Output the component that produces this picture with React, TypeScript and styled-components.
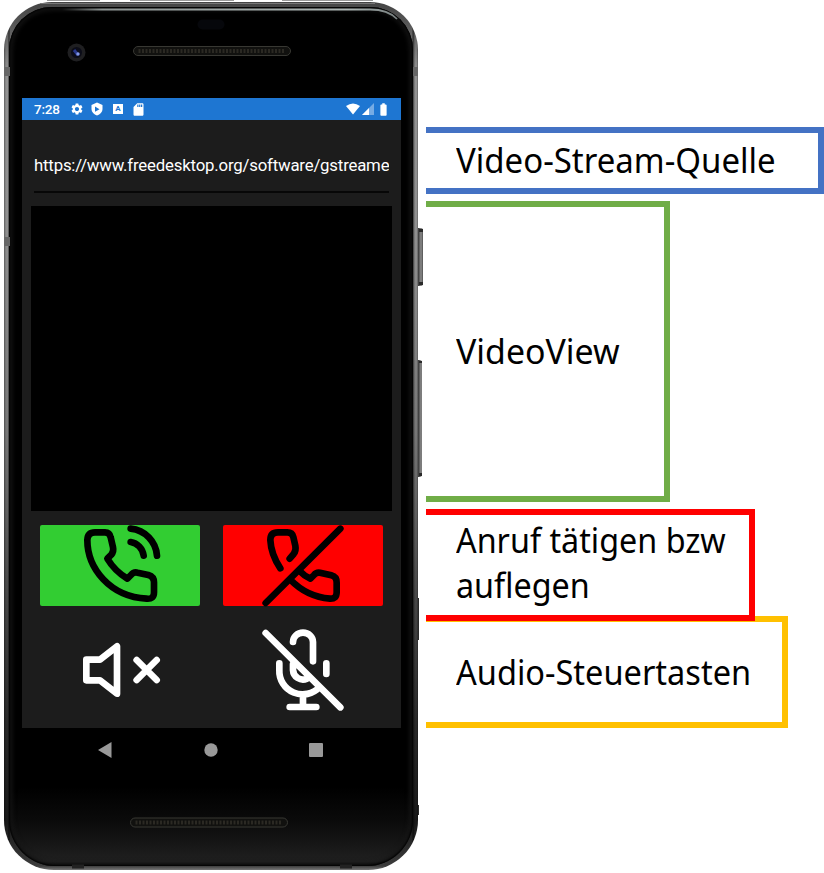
import React from "react";
import styled, { createGlobalStyle } from "styled-components";
import { MdSettings, MdSdCard, MdBatteryFull } from "react-icons/md";

const GlobalStyle = createGlobalStyle`
  * { box-sizing: border-box; }
  body { margin: 0; background: #fff; }
`;

const Page = styled.main`
  width: 824px;
  height: 873px;
  display: flex;
  overflow: hidden;
  background: #fff;
`;

const Phone = styled.section`
  position: relative;
  flex: none;
  width: 414px;
  height: 868px;
  margin: 2px 8px 0 4px;
  padding: 5px 5px 4px;
  border-radius: 48px 48px 50px 50px;
  background:
    linear-gradient(90deg, rgba(0,0,0,.35), transparent 2px, transparent 4px, rgba(0,0,0,.7) 5px, transparent 6px, transparent 408px, rgba(0,0,0,.6) 409px, transparent 411px, transparent 413px, rgba(0,0,0,.4)),
    linear-gradient(180deg, #444 0, #555 20px, #929292 70px, #909090 220px, #777 430px, #4b4b4b 580px, #292929 720px, #181818 820px, #3c3c3c 864px, #777 868px);
`;

const Glass = styled.div`
  height: 100%;
  padding: 91px 12px 0 13px;
  border-radius: 43px 43px 46px 46px;
  box-shadow: inset 0 0 2px 1px #000, inset 0 0 5px 3px #171717;
  background: linear-gradient(180deg, #000 0, #000 780px, #0b0b0b 815px, #202020 855px, #050505 859px);
  display: flex;
  flex-direction: column;
`;

const Overlay = styled.svg`
  position: absolute;
  top: -2px;
  left: -4px;
`;

const StatusBar = styled.header`
  flex: none;
  height: 22px;
  padding: 0 10px 0 12px;
  display: flex;
  align-items: center;
  justify-content: space-between;
  background: #1e76d2;
  color: #fff;
  font: 500 13.5px Roboto, sans-serif;
`;

const StatusGroup = styled.div<{ $gap: number }>`
  display: flex;
  align-items: center;
  gap: ${(p) => p.$gap}px;
  svg { display: block; flex: none; }
`;

const Clock = styled.span`
  width: 29px;
  line-height: 22px;
  letter-spacing: -0.2px;
`;

const LetterTile = styled.span`
  width: 10px;
  height: 10px;
  margin: 0 1px 0 3px;
  background: #fff;
  color: #1e76d2;
  font: 700 8px/10px Roboto, sans-serif;
  text-align: center;
`;

const Content = styled.div`
  flex: none;
  height: 608px;
  padding: 0 9px;
  background: #1c1c1c;
`;

const UrlField = styled.div`
  height: 73px;
  margin: 0 3px 13px;
  padding-top: 31px;
  border-bottom: 2px solid #070707;
  color: #fff;
  font: 16.8px/28px Roboto, sans-serif;
  letter-spacing: -0.19px;
  white-space: nowrap;
  overflow: hidden;
`;

const VideoView = styled.div`
  height: 305px;
  background: #000;
`;

const Controls = styled.div`
  display: grid;
  grid-template-columns: 160px 160px;
  column-gap: 23px;
  row-gap: 24px;
  padding: 14px 9px 0;
`;

const ControlButton = styled.button<{ $tone?: string }>`
  height: 81px;
  padding: 0;
  border: 0;
  border-radius: 2px;
  display: flex;
  justify-content: center;
  background: ${(p) => p.$tone ?? "transparent"};
  color: ${(p) => (p.$tone ? "#000" : "#fff")};
  svg { overflow: visible; }
`;

const NavBar = styled.nav`
  height: 44px;
  display: flex;
  align-items: center;
  justify-content: space-between;
  padding: 0 78px 0 76px;
  svg { display: block; }
`;

const Callouts = styled.aside`
  display: flex;
  flex-direction: column;
  align-items: flex-start;
  padding-top: 127px;
`;

const Callout = styled.div<{ $color: string; $w: number; $h: number; $gap?: number; $lift?: number }>`
  position: relative;
  z-index: ${(p) => (p.$lift ? 1 : 0)};
  width: ${(p) => p.$w}px;
  height: ${(p) => p.$h}px;
  margin-top: ${(p) => p.$gap ?? 0}px;
  padding-left: 30px;
  padding-bottom: ${(p) => p.$lift ?? 0}px;
  border: 6px solid ${(p) => p.$color};
  border-left: 0;
  display: flex;
  align-items: center;
`;

const CalloutText = styled.p<{ $stretch: number }>`
  margin: 0;
  color: #000;
  font: 34px/45px "Noto Sans", sans-serif;
  white-space: pre;
  transform: scaleX(${(p) => p.$stretch});
  transform-origin: left center;
`;

const Glyph = ({ box, d }: { box: string; d: string }) => (
  <svg width="80" height="80" viewBox={box} fill="none" stroke="currentColor" strokeWidth="20" strokeLinecap="round" strokeLinejoin="round">
    <path d={d} />
  </svg>
);

const SpeakerGrille = ({ x, y }: { x: number; y: number }) => (
  <g>
    <rect x={x} y={y} width="157" height="9" rx="4.5" fill="#11110f" stroke="#383833" />
    <path d={`M${x + 5} ${y + 4.5}h147`} stroke="#2b2923" strokeWidth="4" strokeDasharray="2 1.5" />
  </g>
);

const Hardware = () => (
  <Overlay width="424" height="873" viewBox="0 0 424 873" fill="none">
    <defs>
      <linearGradient id="shine" x1="62" x2="397" y1="0" y2="0" gradientUnits="userSpaceOnUse">
        <stop stopColor="#8d9493" stopOpacity="0" />
        <stop offset=".12" stopColor="#8d9493" />
        <stop offset=".85" stopColor="#acb5b3" />
        <stop offset="1" stopColor="#788080" />
      </linearGradient>
      <linearGradient id="key" x1="418" x2="424" y1="0" y2="0" gradientUnits="userSpaceOnUse">
        <stop stopColor="#333" />
        <stop offset=".5" stopColor="#8b8b8b" />
        <stop offset="1" stopColor="#333" />
      </linearGradient>
    </defs>
    <path d="M47 .5h53M130 .5h104M282 .5h91" stroke="#999" />
    <path d="M40 3.5H375" stroke="#777" />
    <path d="M62 9.5H370Q388 9.5 397 19" stroke="url(#shine)" strokeWidth="1.8" />
    <rect x="197.500" y="19.500" width="27" height="10" rx="5" fill="#06070b" />
    <circle cx="76.500" cy="52.500" r="9" fill="#1f1f21" />
    <circle cx="76.500" cy="52.500" r="5.500" fill="#0b0c18" />
    <path d="m74 50 4 5" stroke="#29388c" strokeWidth="3" />
    <circle cx="78" cy="54" r="1.700" fill="#8298e9" />
    <SpeakerGrille x={133.5} y={46.5} />
    <SpeakerGrille x={130.5} y={818} />
    <path d="M4 67h6v9H4zM4 237h6v9H4zM413 67h5v9h-5z" fill="#666" />
    <path d="M418 228h3q2 0 2 3v52q0 3-2 3h-3zM418 360h2q2 0 2 3v111q0 3-2 3h-2z" fill="url(#key)" />
    <path d="M419 229h4v3h-4zM419 282h4v3h-4zM419 361h3v2h-3zM419 473h3v3h-3zM418 598h1v42h-1zM418 805h1v10h-1z" fill="#292929" />
    <path d="M72 866.500h12M340 866.500h12" stroke="#222" strokeWidth="4" />
  </Overlay>
);

export default function App() {
  return (
    <Page>
      <GlobalStyle />
      <Phone>
        <Glass>
          <StatusBar>
            <StatusGroup $gap={7}>
              <Clock>7:28</Clock>
              <MdSettings size={14} />
              <svg width="12" height="14" viewBox="0 0 12 14">
                <path d="M6 .5 11.500 3v4c0 3-2.500 5.500-5.500 6.500C3 12.500.500 10 .500 7V3z" fill="#fff" />
                <path d="m4 4.500 4.500 2.700L4 9.800z" fill="#1e76d2" />
              </svg>
              <LetterTile>A</LetterTile>
              <MdSdCard size={15} />
            </StatusGroup>
            <StatusGroup $gap={2}>
              <svg width="14" height="12" viewBox="0 0 14 12">
                <path d="M0 3Q7-2 14 3L7 11.500z" fill="#fff" />
              </svg>
              <svg width="12" height="12" viewBox="0 0 12 12">
                <path d="M0 12 12 0v12z" fill="#76abe4" />
                <path d="M0 12 7 5v7z" fill="#fff" />
              </svg>
              <MdBatteryFull size={15} />
            </StatusGroup>
          </StatusBar>
          <Content>
            <UrlField>https://www.freedesktop.org/software/gstreame</UrlField>
            <VideoView />
            <Controls>
              <ControlButton $tone="#32cd32" aria-label="Anrufen">
                <Glyph
                  box="150 30 240 240"
                  d="M195 52H225Q239 52 242 67L249 97Q252 110 244 119L232 131Q254 168 292 191L303 180Q311 170 323 173L355 180Q372 185 372 202V232Q372 253 350 251C240 245 172 160 172 75Q173 52 195 52M302 41C345 45 378 80 381 122M302 81C322 84 338 100 341 122"
                />
              </ControlButton>
              <ControlButton $tone="#ff0000" aria-label="Auflegen">
                <Glyph
                  box="160 30 240 240"
                  d="M212 160Q184 118 182 75Q182 52 205 52H233Q248 52 251 66L257 92Q260 107 252 117L240 131M168 264 392 41M270 168Q285 184 302 191L313 180Q320 171 331 173L365 181Q381 185 381 203V232Q381 252 361 251C315 247 275 228 243 195"
                />
              </ControlButton>
              <ControlButton aria-label="Ton aus">
                <Glyph box="60 30 240 240" d="M79 119H120L171 79V221L120 181H79ZM230 120l60 60M290 120l-60 60" />
              </ControlButton>
              <ControlButton aria-label="Mikrofon aus">
                <Glyph
                  box="610 30 240 240"
                  d="M618 39 842 262M700 66a30 28 0 0 1 60 0V124M800 130V162M659 130V150A70 70 0 0 0 780 201M700 132V150A30 30 0 0 0 742 176M730 225V260M690 261H770"
                />
              </ControlButton>
            </Controls>
          </Content>
          <NavBar>
            <svg width="14" height="16"><path d="M13.500 0v16L0 8z" fill="#999" /></svg>
            <svg width="14" height="14"><circle cx="7" cy="7" r="6.700" fill="#999" /></svg>
            <svg width="14" height="14"><rect width="14" height="14" rx="1" fill="#999" /></svg>
          </NavBar>
        </Glass>
        <Hardware />
      </Phone>
      <Callouts>
        <Callout $color="#4472c4" $w={398} $h={67}>
          <CalloutText $stretch={0.97}>Video-Stream-Quelle</CalloutText>
        </Callout>
        <Callout $color="#70ad47" $w={244} $h={301} $gap={7}>
          <CalloutText $stretch={0.996}>VideoView</CalloutText>
        </Callout>
        <Callout $color="#ff0000" $w={329} $h={112} $gap={7} $lift={5}>
          <CalloutText $stretch={0.95}>{"Anruf tätigen bzw\nauflegen"}</CalloutText>
        </Callout>
        <Callout $color="#ffc000" $w={362} $h={112} $gap={-5}>
          <CalloutText $stretch={0.957}>Audio-Steuertasten</CalloutText>
        </Callout>
      </Callouts>
    </Page>
  );
}
